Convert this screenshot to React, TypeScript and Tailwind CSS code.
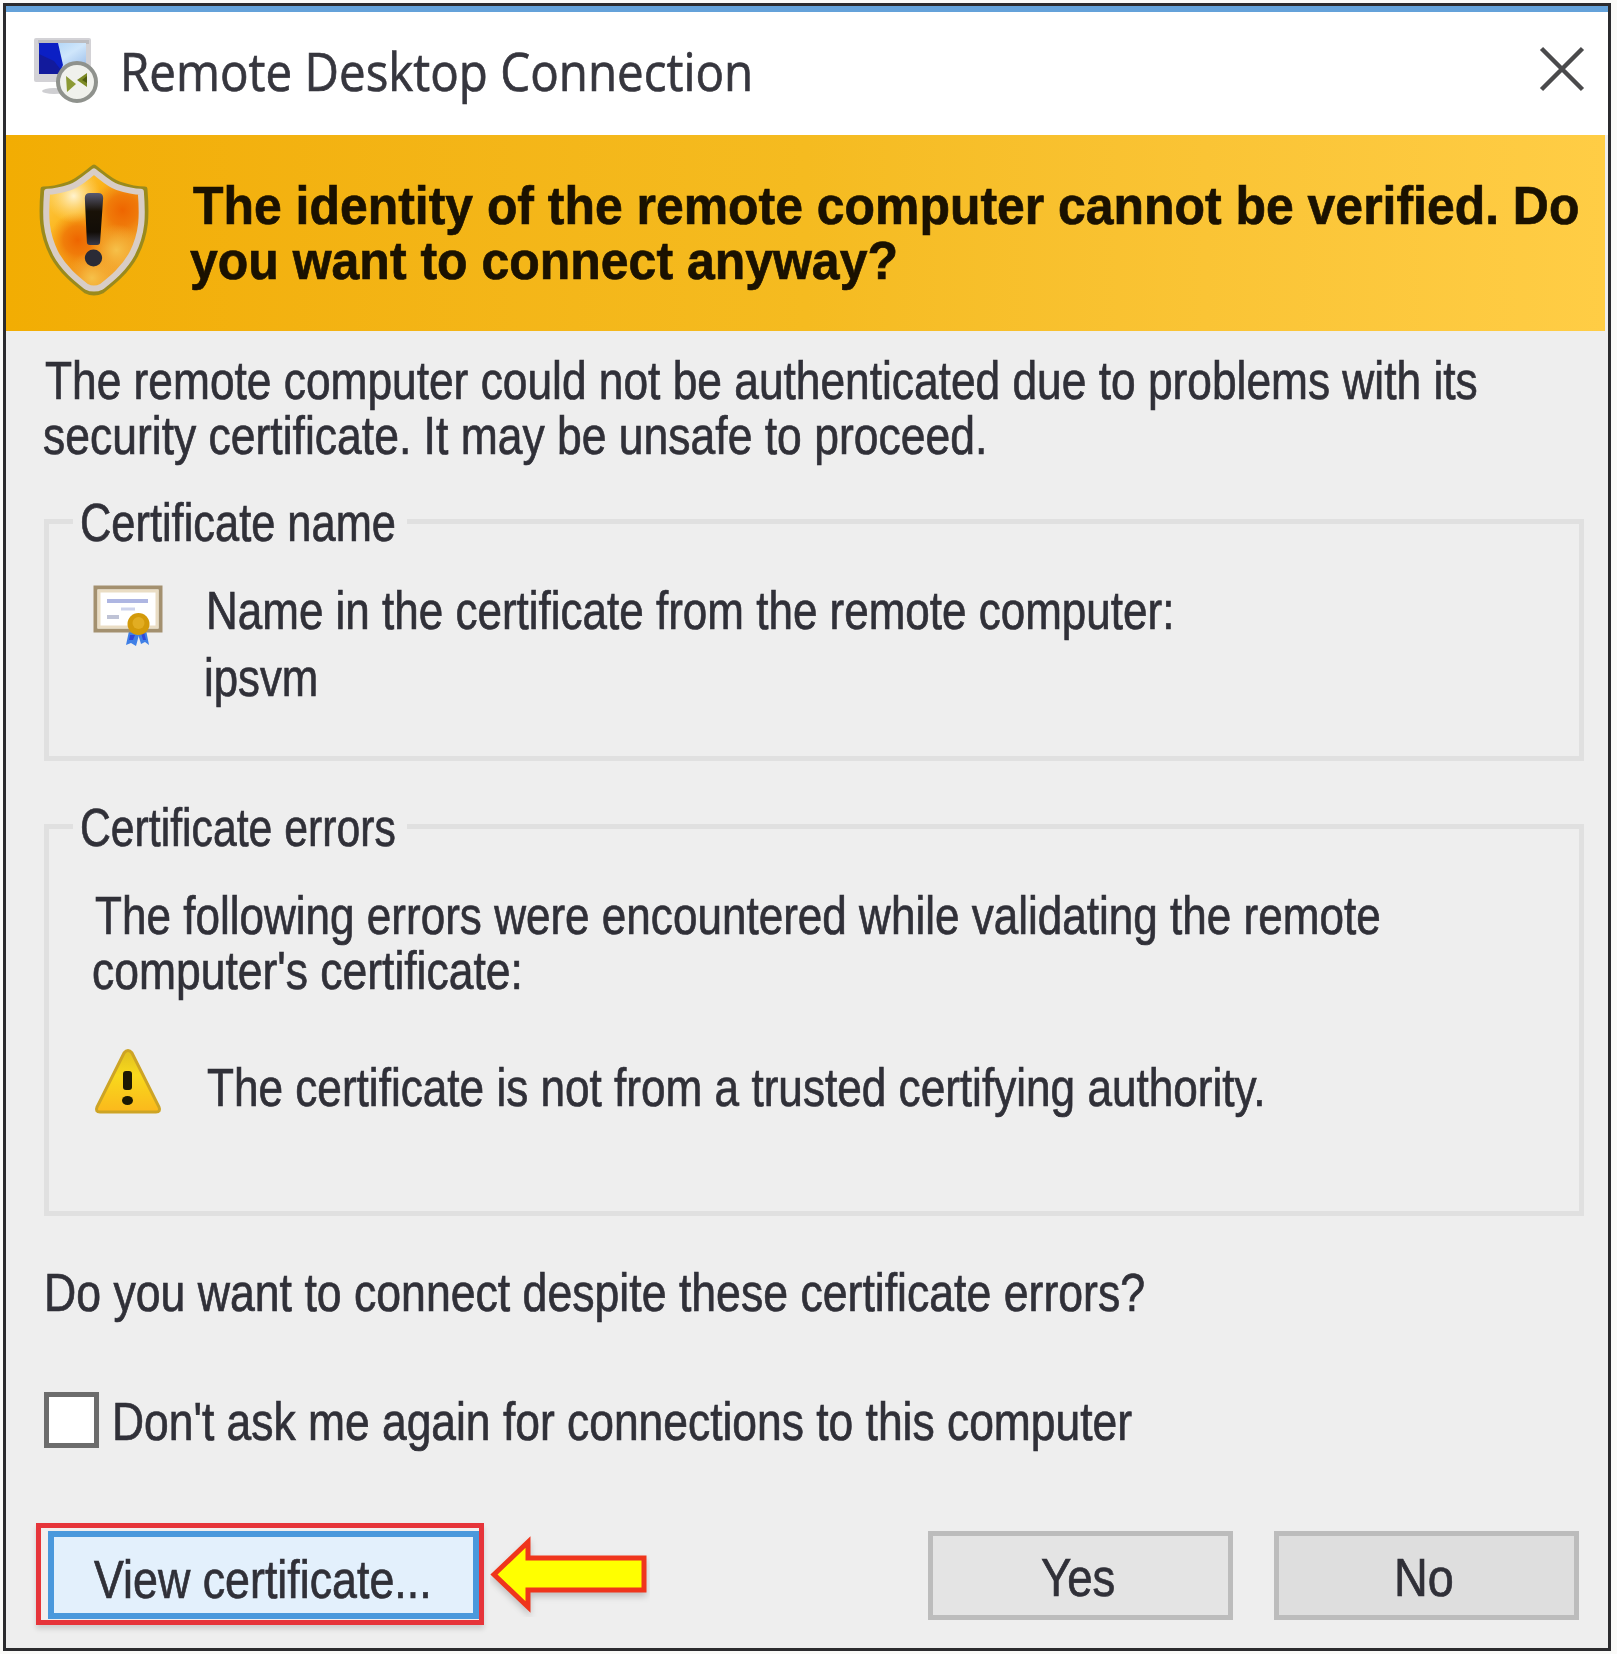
import { useLayoutEffect, useRef, useState, type ReactNode } from "react";

type LineProps = { width: number; className?: string; children: ReactNode };

/** One line of dialog text, condensed horizontally to the given width. */
function Line({ width, className = "", children }: LineProps) {
  const ref = useRef<HTMLSpanElement>(null);
  const [scale, setScale] = useState(1);
  useLayoutEffect(() => {
    if (ref.current) setScale(width / ref.current.offsetWidth);
  }, [width]);
  return (
    <div className={`h-[55px] leading-[55px] whitespace-nowrap ${className}`} style={{ width }}>
      <span ref={ref} className="inline-block origin-left" style={{ transform: `scaleX(${scale})` }}>
        {children}
      </span>
    </div>
  );
}

function RemoteDesktopIcon() {
  return (
    <svg className="h-[72px] w-[70px] shrink-0" viewBox="0 0 70 72">
      <defs>
        <linearGradient id="sky" x1="0" y1="0" x2="1" y2="1">
          <stop offset="0" stopColor="#a4cef5" />
          <stop offset=".5" stopColor="#cfe6fb" />
          <stop offset="1" stopColor="#8fb4e6" />
        </linearGradient>
      </defs>
      <ellipse cx="20" cy="55" rx="12" ry="3" fill="#cfcfd2" />
      <rect x="0" y="2" width="57" height="44" rx="2" fill="#d3d2d6" />
      <rect x="4" y="4" width="51" height="4" fill="#bcbcc0" />
      <rect x="5" y="7" width="47" height="31" fill="url(#sky)" />
      <path d="M5 7H24L29 29L25 38H5Z" fill="#0b1fc4" />
      <path d="M5 18L20 25L27 34L25 38H5Z" fill="#121a9c" />
      <circle cx="43" cy="46" r="19" fill="#f0f1ec" stroke="#8f928d" strokeWidth="4" />
      <path d="M32 40L42 48L33 56Z" fill="#8c9a35" />
      <path d="M53 37L43 44L53 51Z" fill="#7c8a24" />
      <path d="M53 40L48 44L53 47Z" fill="#4f5c10" />
    </svg>
  );
}

function ShieldIcon() {
  const outline = "M54 3C62 9 70 17 79 20C88 23 97 25 104 25C106 51 106 69 95 91C86 108 72 119 62 127Q54 131 46 127C36 119 22 108 13 91C2 69 2 51 4 25C11 25 20 23 29 20C38 17 46 9 54 3Z";
  return (
    <svg className="h-[132px] w-[110px] shrink-0" viewBox="0 0 108 132" preserveAspectRatio="none">
      <defs>
        <linearGradient id="amber" x1="0" y1="0" x2="1" y2="1">
          <stop offset="0" stopColor="#ffd458" />
          <stop offset=".35" stopColor="#fbb41b" />
          <stop offset=".6" stopColor="#f08a12" />
          <stop offset="1" stopColor="#f5c04b" />
        </linearGradient>
        <radialGradient id="glow">
          <stop offset="0" stopColor="#fff3cf" />
          <stop offset="1" stopColor="#ffe08a" stopOpacity="0" />
        </radialGradient>
        <radialGradient id="ember">
          <stop offset="0" stopColor="#ee6500" />
          <stop offset=".5" stopColor="#ef7306" stopOpacity=".8" />
          <stop offset="1" stopColor="#f08a12" stopOpacity="0" />
        </radialGradient>
        <radialGradient id="honey">
          <stop offset="0" stopColor="#f6c14a" />
          <stop offset="1" stopColor="#f6b53a" stopOpacity="0" />
        </radialGradient>
        <linearGradient id="mark" x1="0" y1="0" x2="0" y2="1">
          <stop offset="0" stopColor="#595a72" />
          <stop offset=".35" stopColor="#191207" />
          <stop offset=".75" stopColor="#120d07" />
          <stop offset="1" stopColor="#393a49" />
        </linearGradient>
        <clipPath id="shieldClip"><path d={outline} /></clipPath>
      </defs>
      <path d={outline} fill="url(#amber)" />
      <g clipPath="url(#shieldClip)">
        <circle cx="82" cy="46" r="30" fill="url(#ember)" />
        <circle cx="38" cy="76" r="28" fill="url(#ember)" />
        <circle cx="76" cy="86" r="26" fill="url(#honey)" />
        <circle cx="52" cy="114" r="26" fill="url(#honey)" />
        <circle cx="34" cy="32" r="27" fill="url(#glow)" />
      </g>
      <path d={outline} fill="none" stroke="#9a8a1c" strokeWidth="5" strokeLinejoin="round" />
      <path d={outline} fill="none" stroke="#d8cdc6" strokeWidth="6.500" strokeLinejoin="round" transform="translate(4.300 4.600) scale(.92 .93)" />
      <path d="M45 34Q45 29 50 29H58Q63 29 63 34L60 78Q60 81 57 81H50Q47 81 47 78Z" fill="url(#mark)" />
      <circle cx="53.500" cy="94" r="8.500" fill="#2a2b36" />
    </svg>
  );
}

function CertificateIcon() {
  return (
    <svg className="h-[64px] w-[70px] shrink-0" viewBox="0 0 70 64">
      <path d="M36 46L33 60L38 58L43 61L46 50Z" fill="#3f7fe6" />
      <path d="M45 49L48 59L52 57L56 60L53 45Z" fill="#3f7fe6" />
      <path d="M37 50L36 55L40 55L42 50ZM48 48L50 55H53L51 47Z" fill="#2f47dc" />
      <rect x="2.500" y="2.500" width="65" height="43" fill="#fff" stroke="#a3906f" strokeWidth="4" />
      <rect x="6" y="6" width="58" height="36" fill="none" stroke="#eaddc4" strokeWidth="3" />
      <path d="M14 16H55" stroke="#aeb6e2" strokeWidth="4" />
      <path d="M28 24H42" stroke="#cdd3ec" strokeWidth="3" />
      <path d="M14 32H26" stroke="#bfc3d6" strokeWidth="4" />
      <circle cx="45.500" cy="39" r="11" fill="#d39a0a" />
      <circle cx="45.500" cy="38" r="6" fill="#e2ad22" />
    </svg>
  );
}

function WarningIcon() {
  return (
    <svg className="h-[66px] w-[70px] shrink-0" viewBox="0 0 70 66">
      <defs>
        <linearGradient id="warn" x1="0" y1="0" x2="0" y2="1">
          <stop offset="0" stopColor="#e0bf20" />
          <stop offset=".4" stopColor="#f8d91c" />
          <stop offset="1" stopColor="#fbb81c" />
        </linearGradient>
      </defs>
      <path d="M31 4Q35 -1 39 4L66 58Q68 63 63 63H7Q2 63 4 58Z" fill="url(#warn)" stroke="#cda425" strokeWidth="3" />
      <rect x="30" y="22" width="9" height="19" rx="3" fill="#1c1903" />
      <ellipse cx="34.500" cy="51.500" rx="5.500" ry="4.500" fill="#1c1903" />
    </svg>
  );
}

function GroupBox({ title, className, children }: { title: string; className: string; children: ReactNode }) {
  return (
    <section className={`ml-[38px] w-[1540px] border-[5px] border-[#e0e0e0] ${className}`}>
      <div className="-mt-[29px] ml-[24px] w-[334px] bg-[#eeeeee] pl-[7px]">
        <Line width={316}>{title}</Line>
      </div>
      {children}
    </section>
  );
}

export default function App() {
  return (
    <div className="flex h-[1654px] w-[1617px] overflow-hidden bg-[#fafaf8] pt-[3px] pl-[3px] font-['Liberation_Sans',sans-serif] text-[53px] text-[#303038] [-webkit-text-stroke:0.7px]">
      <main className="flex h-[1648px] w-[1608px] flex-col border-[3px] border-[#2b2b2e] bg-[#eeeeee]">
        <header className="flex h-[129px] w-full items-start border-t-[6px] border-[#64a2da] bg-white">
          <div className="mt-[24px] ml-[28px]"><RemoteDesktopIcon /></div>
          <div className="mt-[31px] ml-[16px] font-['Open_Sans',sans-serif] text-[53px] text-[#36363e]">
            <Line width={633}>Remote Desktop Connection</Line>
          </div>
          <button aria-label="Close" className="mt-[34px] mr-[23px] ml-auto">
            <svg className="h-[46px] w-[46px]" viewBox="0 0 46 46">
              <path d="M2.500 2.500L43.500 43.500M43.500 2.500L2.500 43.500" stroke="#4a4a4c" strokeWidth="4.500" />
            </svg>
          </button>
        </header>
        <div className="flex h-[196px] w-[1599px] shrink-0 bg-linear-to-r from-[#f2ad03] via-[#f5bb20] to-[#ffcd45]">
          <div className="mt-[29px] ml-[33px]"><ShieldIcon /></div>
          <div className="mt-[43px] ml-[41px] font-bold text-[#1a1100]">
            <Line width={1386} className="ml-[3px]">The identity of the remote computer cannot be verified. Do</Line>
            <Line width={708}>you want to connect anyway?</Line>
          </div>
        </div>
        <div className="mt-[22px] ml-[37px]">
          <Line width={1433} className="ml-[2px]">The remote computer could not be authenticated due to problems with its</Line>
          <Line width={944}>security certificate. It may be unsafe to proceed.</Line>
        </div>
        <GroupBox title="Certificate name" className="mt-[56px] h-[242px]">
          <div className="mt-[33px] ml-[44px] flex">
            <div className="mt-[2px]"><CertificateIcon /></div>
            <div className="ml-[43px]">
              <Line width={968}>Name in the certificate from the remote computer:</Line>
              <Line width={114} className="mt-[12px] -ml-[2px]">ipsvm</Line>
            </div>
          </div>
        </GroupBox>
        <GroupBox title="Certificate errors" className="mt-[63px] h-[392px]">
          <div className="mt-[33px] ml-[45px]">
            <Line width={1286} className="ml-[1px]">The following errors were encountered while validating the remote</Line>
            <Line width={431} className="-ml-[2px]">computer's certificate:</Line>
          </div>
          <div className="mt-[51px] ml-[44px] flex items-start">
            <div><WarningIcon /></div>
            <Line width={1059} className="mt-[11px] ml-[44px]">The certificate is not from a trusted certifying authority.</Line>
          </div>
        </GroupBox>
        <Line width={1101} className="mt-[49px] ml-[38px]">Do you want to connect despite these certificate errors?</Line>
        <label className="mt-[72px] ml-[38px] flex h-[56px] items-start">
          <span className="h-[56px] w-[55px] border-[5px] border-[#6c6c6c] bg-white" />
          <Line width={1020} className="mt-[2px] ml-[13px]">Don't ask me again for connections to this computer</Line>
        </label>
        <footer className="mt-[75px] ml-[30px] flex">
          <div className="h-[102px] w-[448px] shrink-0 border-[5px] border-[#e6343a] bg-[#f2eeee] pt-[3px] pl-[7px] shadow-[0_4px_5px_#00000022]">
            <button className="block h-[88px] w-[431px] border-[6px] border-[#4a98dc] bg-[#e3f0fc] pt-[9px] pl-[40px] text-left">
              <Line width={338}>View certificate...</Line>
            </button>
          </div>
          <svg className="mt-[12px] ml-[6px] h-[82px] w-[160px] shrink-0" viewBox="0 0 160 82">
            <path d="M4 39.500L38 7V23H154V55H38V72Z" fill="#ffff00" stroke="#ef351c" strokeWidth="5" className="drop-shadow-[0_4px_3px_#00000030]" />
          </svg>
          <button className="mt-[8px] ml-[278px] flex h-[89px] w-[305px] shrink-0 justify-center border-[5px] border-[#bcbcbc] bg-[#e4e4e4] pt-[14px]">
            <Line width={74} className="-ml-[6px]">Yes</Line>
          </button>
          <button className="mt-[8px] ml-[41px] flex h-[89px] w-[305px] shrink-0 justify-center border-[5px] border-[#bcbcbc] bg-[#dedede] pt-[14px]">
            <Line width={60} className="-ml-[6px]">No</Line>
          </button>
        </footer>
      </main>
    </div>
  );
}
